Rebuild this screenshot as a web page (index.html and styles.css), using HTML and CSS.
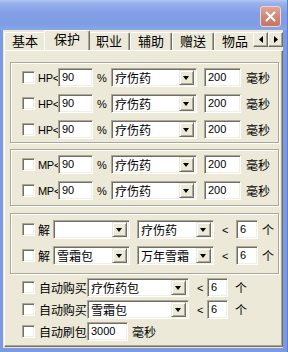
FILE: index.html
```html
<!DOCTYPE html>
<html lang="zh-CN">
<head>
<meta charset="UTF-8">
<title>保护</title>
<link rel="stylesheet" href="styles.css">
</head>
<body>
<div class="window">
    <div class="titlebar">
        <span class="close">
            <svg width="11" height="11" viewBox="0 0 11 11"><path d="M1 1 L10 10 M10 1 L1 10" stroke="#fff" stroke-width="2" fill="none"/></svg>
        </span>
    </div>
    <div class="client">
        <div class="tabbar">
            <div class="tablist">
                <span class="tab">基本</span>
                <span class="tab active">保护</span>
                <span class="tab">职业</span>
                <span class="tab">辅助</span>
                <span class="tab">赠送</span>
                <span class="tab">物品</span>
            </div>
            <div class="spin">
                <span class="spin-btn"><svg width="4" height="7" viewBox="0 0 4 7"><path d="M4 0 L0 3.5 L4 7 Z" fill="#000"/></svg></span>
                <span class="spin-btn"><svg width="4" height="7" viewBox="0 0 4 7"><path d="M0 0 L4 3.5 L0 7 Z" fill="#000"/></svg></span>
            </div>
        </div>
        <div class="panel">
            <div class="group g1">
                <div class="row">
                    <span class="check"></span><span class="lbl hp">HP&lt;</span><span class="field num w35">90</span>
                    <span class="lbl pct">%</span>
                    <span class="combo w86"><span class="combo-text">疗伤药</span><span class="drop"></span></span>
                    <span class="field num w37">200</span><span class="lbl ms">毫秒</span>
                </div>
                <div class="row">
                    <span class="check"></span><span class="lbl hp">HP&lt;</span><span class="field num w35">90</span>
                    <span class="lbl pct">%</span>
                    <span class="combo w86"><span class="combo-text">疗伤药</span><span class="drop"></span></span>
                    <span class="field num w37">200</span><span class="lbl ms">毫秒</span>
                </div>
                <div class="row">
                    <span class="check"></span><span class="lbl hp">HP&lt;</span><span class="field num w35">90</span>
                    <span class="lbl pct">%</span>
                    <span class="combo w86"><span class="combo-text">疗伤药</span><span class="drop"></span></span>
                    <span class="field num w37">200</span><span class="lbl ms">毫秒</span>
                </div>
            </div>

            <div class="group g2">
                <div class="row">
                    <span class="check"></span><span class="lbl hp">MP&lt;</span><span class="field num w35">90</span>
                    <span class="lbl pct">%</span>
                    <span class="combo w86"><span class="combo-text">疗伤药</span><span class="drop"></span></span>
                    <span class="field num w37">200</span><span class="lbl ms">毫秒</span>
                </div>
                <div class="row">
                    <span class="check"></span><span class="lbl hp">MP&lt;</span><span class="field num w35">90</span>
                    <span class="lbl pct">%</span>
                    <span class="combo w86"><span class="combo-text">疗伤药</span><span class="drop"></span></span>
                    <span class="field num w37">200</span><span class="lbl ms">毫秒</span>
                </div>
            </div>

            <div class="group g3">
                <div class="row">
                    <span class="check"></span><span class="lbl jie">解</span>
                    <span class="combo w77"><span class="combo-text"></span><span class="drop"></span></span>
                    <span class="combo w77 gap7"><span class="combo-text">疗伤药</span><span class="drop"></span></span>
                    <span class="lbl lt">&lt;</span><span class="field num w22">6</span><span class="lbl ge">个</span>
                </div>
                <div class="row">
                    <span class="check"></span><span class="lbl jie">解</span>
                    <span class="combo w77"><span class="combo-text">雪霜包</span><span class="drop"></span></span>
                    <span class="combo w77 gap7"><span class="combo-text">万年雪霜</span><span class="drop"></span></span>
                    <span class="lbl lt">&lt;</span><span class="field num w22">6</span><span class="lbl ge">个</span>
                </div>
            </div>

            <div class="loose">
                <div class="row">
                    <span class="check"></span><span class="lbl buy">自动购买</span>
                    <span class="combo w102"><span class="combo-text">疗伤药包</span><span class="drop"></span></span>
                    <span class="lbl lt2">&lt;</span><span class="field num w21">6</span><span class="lbl ge2">个</span>
                </div>
                <div class="row">
                    <span class="check"></span><span class="lbl buy">自动购买</span>
                    <span class="combo w102"><span class="combo-text">雪霜包</span><span class="drop"></span></span>
                    <span class="lbl lt2">&lt;</span><span class="field num w21">6</span><span class="lbl ge2">个</span>
                </div>
                <div class="row">
                    <span class="check"></span><span class="lbl buy">自动刷包</span>
                    <span class="field num w41">3000</span><span class="lbl ms2">毫秒</span>
                </div>
            </div>
        </div>
    </div>
</div>
</body>
</html>
```

FILE: styles.css
```css
body {
    margin: 0;
    background-color: #7e9ce4;
    font-family: "Noto Sans CJK SC", sans-serif;
    font-size: 12px;
    color: #000;
}

.window {
    width: 288px;
    height: 352px;
    box-sizing: border-box;
    display: flex;
    flex-direction: column;
    padding: 0 4px 4px 3px;
    background-color: #7b9ae2;
    border-right: 1px solid #5f7fcf;
}

.titlebar {
    height: 30px;
    margin: 0 -4px 0 -3px;
    display: flex;
    justify-content: flex-end;
    align-items: flex-start;
    padding: 6px 6px 0 0;
    box-sizing: border-box;
    background: linear-gradient(to bottom, #b3c6f2 0%, #97b0ec 12%, #829fe5 45%, #7f9de4 80%, #88a6e9 100%);
}

.close {
    width: 19px;
    height: 19px;
    border: 1px solid #eed6d0;
    border-radius: 3px;
    background: linear-gradient(to bottom, #e0a596 0%, #cf8372 60%, #c87565 100%);
    display: flex;
    align-items: center;
    justify-content: center;
}

.client {
    flex: 1;
    background-color: #ece9d8;
    display: flex;
    flex-direction: column;
}

/* tabs */
.tabbar {
    height: 20px;
    display: flex;
    position: relative;
    z-index: 2;
}

.tablist {
    width: 249px;
    padding-left: 1px;
    display: flex;
    align-items: flex-end;
    overflow: hidden;
}

.tab {
    flex: none;
    width: 42px;
    height: 18px;
    box-sizing: border-box;
    border-top: 1px solid #fff;
    border-left: 1px solid #fff;
    border-right: 1px solid #716f64;
    box-shadow: inset -1px 0 #aca899;
    border-radius: 2px 2px 0 0;
    text-align: center;
    font-size: 13px;
    line-height: 16px;
}

.tab.active {
    width: 46px;
    height: 21px;
    margin: 0 -2px -1px -2px;
    position: relative;
    z-index: 1;
    background-color: #ece9d8;
    line-height: 15px;
}

.spin {
    display: flex;
    margin-top: 2px;
    height: 15px;
}

.spin-btn {
    width: 15px;
    height: 15px;
    box-sizing: border-box;
    border-top: 1px solid #fff;
    border-left: 1px solid #fff;
    border-right: 1px solid #716f64;
    border-bottom: 1px solid #716f64;
    box-shadow: inset -1px -1px #aca899;
    display: flex;
    align-items: center;
    justify-content: center;
}

.panel {
    flex: 1;
    margin: 0 0 1px 1px;
    border-top: 1px solid #fff;
    border-left: 1px solid #fff;
    border-right: 1px solid #716f64;
    border-bottom: 1px solid #716f64;
    box-shadow: inset -1px -1px #aca899;
    padding: 11px 3px 0 5px;
}

/* group boxes */
.group {
    border: 1px solid #aca899;
    box-shadow: inset 1px 1px #fff, 1px 1px #fff;
    display: flex;
    flex-direction: column;
    gap: 7px;
}

.g1 {
    height: 81px;
    box-sizing: border-box;
    padding-top: 5px;
}

.g2 {
    height: 57px;
    box-sizing: border-box;
    margin-top: 6px;
    padding-top: 5px;
}

.g3 {
    height: 61px;
    box-sizing: border-box;
    margin-top: 7px;
    padding-top: 6px;
}

.loose {
    display: flex;
    flex-direction: column;
    gap: 3px;
    margin-top: 4px;
    padding-left: 1px;
}

.row {
    height: 19px;
    display: flex;
    align-items: center;
}

.check {
    flex: none;
    width: 13px;
    height: 13px;
    box-sizing: border-box;
    margin-left: 11px;
    background-color: #fff;
    border-top: 1px solid #aca899;
    border-left: 1px solid #aca899;
    border-right: 1px solid #fff;
    border-bottom: 1px solid #fff;
    box-shadow: inset 1px 1px #716f64, inset -1px -1px #f1efe2;
}

.lbl {
    flex: none;
    white-space: nowrap;
}

.hp {
    width: 20px;
    margin-left: 3px;
    font-family: "Liberation Sans", sans-serif;
    font-size: 11px;
    letter-spacing: -0.3px;
}

.pct {
    width: 8px;
    margin-left: 4px;
    font-family: "Liberation Sans", sans-serif;
    font-size: 11px;
}

.ms {
    margin-left: 5px;
}

.jie {
    width: 12px;
    margin-left: 3px;
}

.lt {
    width: 6px;
    margin-left: 8px;
    font-family: "Liberation Sans", sans-serif;
    font-size: 11px;
}

.ge {
    margin-left: 4px;
}

.buy {
    width: 48px;
    margin-left: 4px;
    letter-spacing: -0.1px;
}

.lt2 {
    width: 6px;
    margin-left: 8px;
    font-family: "Liberation Sans", sans-serif;
    font-size: 11px;
}

.ge2 {
    margin-left: 7px;
}

.ms2 {
    margin-left: 4px;
}

/* sunken edit fields */
.field,
.combo {
    flex: none;
    height: 19px;
    box-sizing: border-box;
    background-color: #fff;
    border-top: 1px solid #aca899;
    border-left: 1px solid #aca899;
    border-right: 1px solid #fff;
    border-bottom: 1px solid #fff;
    box-shadow: inset 1px 1px #716f64, inset -1px -1px #f1efe2;
    position: relative;
    z-index: 1;
}

.field {
    padding: 0 0 0 3px;
    line-height: 17px;
}

.num {
    font-family: "Liberation Sans", sans-serif;
    font-size: 11px;
}

.w35 { width: 35px; }
.w37 { width: 37px; margin-left: 7px; }
.w86 { width: 86px; margin-left: 6px; }
.w77 { width: 77px; margin-left: 3px; }
.w77.gap7 { margin-left: 7px; }
.w22 { width: 22px; margin-left: 8px; }
.w21 { width: 21px; margin-left: 4px; }
.w102 { width: 102px; }
.w41 { width: 41px; }

.combo {
    display: flex;
    align-items: center;
    padding: 2px;
}

.combo-text {
    flex: 1;
    padding-left: 1px;
    line-height: 15px;
    white-space: nowrap;
    overflow: hidden;
}

.drop {
    flex: none;
    width: 15px;
    height: 15px;
    box-sizing: border-box;
    background-color: #ece9d8;
    border-top: 1px solid #ece9d8;
    border-left: 1px solid #ece9d8;
    border-right: 1px solid #716f64;
    border-bottom: 1px solid #716f64;
    box-shadow: inset 1px 1px #fff, inset -1px -1px #aca899;
    position: relative;
}

.drop::after {
    content: "";
    position: absolute;
    left: 3px;
    top: 5px;
    border-left: 3.5px solid transparent;
    border-right: 3.5px solid transparent;
    border-top: 4px solid #000;
}
```
